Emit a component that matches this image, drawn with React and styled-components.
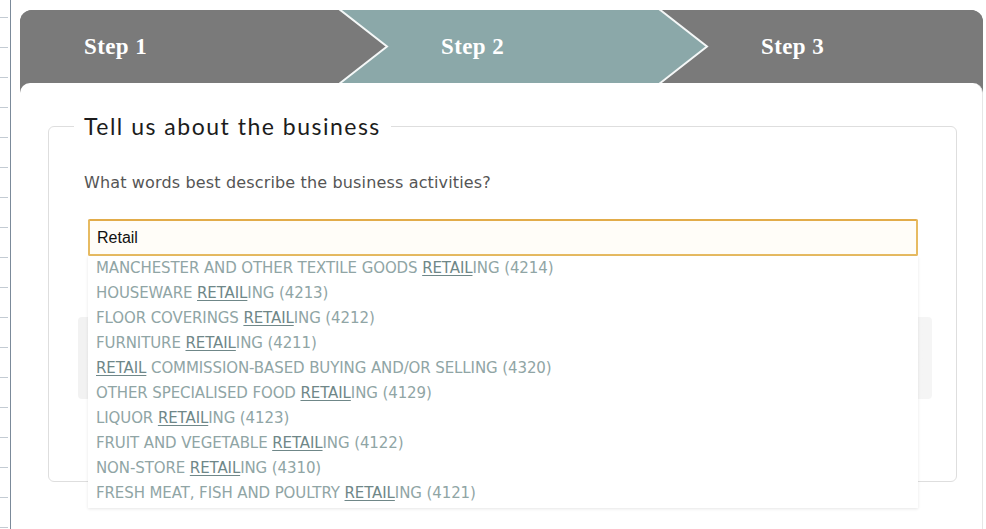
import React from "react";
import styled, { createGlobalStyle } from "styled-components";

const GlobalStyle = createGlobalStyle`
    html, body {
        margin: 0;
        padding: 0;
        background: #ffffff;
        overflow: hidden;
    }
`;

const Page = styled.div`
    display: flex;
    height: 529px;
    overflow: hidden;
`;

const Ruler = styled.div`
    width: 10px;
    flex: none;
    border-right: 1px solid #7b8a9a;
    background: linear-gradient(to bottom, transparent 17px, #c3cbd3 17px, #c3cbd3 18px, transparent 18px) 0 0 / 8px 30px repeat-y;
`;

const Main = styled.main`
    width: 963px;
    margin-left: 9px;
    padding-top: 10px;
    display: flex;
    flex-direction: column;
`;

const TabBar = styled.nav`
    position: relative;
    z-index: 0;
    display: flex;
    background: #7a7a7a;
    border-radius: 12px 12px 0 0;
    padding-bottom: 10px;
    overflow: hidden;
`;

const Step = styled.div`
    position: relative;
    z-index: ${(p) => p.$layer};
    flex: ${(p) => (p.$last ? "1" : "none")};
    width: ${(p) => (p.$last ? "auto" : "320px")};
    height: 73px;
    display: flex;
    align-items: center;
    padding-left: ${(p) => p.$indent}px;
    box-sizing: border-box;
    background: ${(p) => (p.$active ? "#8ba8a9" : "#7a7a7a")};
    color: #ffffff;
    font-family: "Liberation Serif", serif;
    font-weight: bold;
    font-size: 23px;
    letter-spacing: 0.4px;
`;

const Chevron = styled.svg`
    position: absolute;
    top: 0;
    right: -48px;
    width: 49px;
    height: 73px;
    overflow: visible;
`;

const Card = styled.section`
    position: relative;
    z-index: 1;
    margin-top: -10px;
    flex: 1;
    background: #ffffff;
    border-radius: 10px 10px 0 0;
    border-right: 1px solid #e6e6e6;
    padding: 29px 25px 0 28px;
`;

const Fieldset = styled.fieldset`
    margin: 0;
    border: 1px solid #dedede;
    border-radius: 6px;
    padding: 10px 38px 84px 35px;
    height: 370px;
    box-sizing: border-box;
`;

const Legend = styled.legend`
    margin-left: -10px;
    padding: 0 10px;
    font-family: Lato, "Open Sans", sans-serif;
    font-size: 23px;
    line-height: 28px;
    color: #1c1c1c;
    letter-spacing: 1.5px;
`;

const Question = styled.p`
    margin: 23px 0 0;
    font-family: "DejaVu Sans", sans-serif;
    font-size: 16px;
    line-height: 20px;
    color: #555555;
    letter-spacing: 0.15px;
`;

const Field = styled.div`
    position: relative;
    margin: 26px 0 0 4px;
`;

const Input = styled.div`
    height: 37px;
    box-sizing: border-box;
    border: 2px solid #e7bb62;
    border-top-color: #e2ac4a;
    border-radius: 2px;
    background: #fffdf8;
    padding-left: 7px;
    display: flex;
    align-items: center;
    font-family: "Liberation Sans", Arial, sans-serif;
    font-size: 16px;
    color: #111111;
`;

const Suggestions = styled.ul`
    position: absolute;
    top: 37px;
    left: 0;
    right: 0;
    z-index: 2;
    margin: 0;
    padding: 0 0 2px;
    list-style: none;
    background: #ffffff;
    box-shadow: 0 1px 3px rgba(0, 0, 0, 0.1);
`;

const Suggestion = styled.li`
    padding-left: 8px;
    font-family: "DejaVu Sans", sans-serif;
    font-size: 15px;
    line-height: 25px;
    color: #90a5a5;
    white-space: nowrap;
    letter-spacing: -0.1px;
`;

const Match = styled.span`
    color: #6f8788;
    text-decoration: underline;
    text-underline-offset: 2px;
`;

const Shade = styled.div`
    margin: 61px -14px 0 -6px;
    height: 82px;
    border-radius: 4px;
    background: linear-gradient(to right, #f2f2f2, #f5f5f5);
`;

const steps = [
    { label: "Step 1", indent: 64, fill: "#7a7a7a" },
    { label: "Step 2", indent: 101, fill: "#8ba8a9", active: true },
    { label: "Step 3", indent: 101 },
];

const suggestions = [
    ["MANCHESTER AND OTHER TEXTILE GOODS ", "ING (4214)"],
    ["HOUSEWARE ", "ING (4213)"],
    ["FLOOR COVERINGS ", "ING (4212)"],
    ["FURNITURE ", "ING (4211)"],
    ["", " COMMISSION-BASED BUYING AND/OR SELLING (4320)"],
    ["OTHER SPECIALISED FOOD ", "ING (4129)"],
    ["LIQUOR ", "ING (4123)"],
    ["FRUIT AND VEGETABLE ", "ING (4122)"],
    ["NON-STORE ", "ING (4310)"],
    ["FRESH MEAT, FISH AND POULTRY ", "ING (4121)"],
];

const App = () => {
    return (
        <Page>
            <GlobalStyle />
            <Ruler />
            <Main>
                <TabBar>
                    {steps.map((s, i) => (
                        <Step
                            key={s.label}
                            $indent={s.indent}
                            $active={s.active}
                            $last={i === steps.length - 1}
                            $layer={steps.length - i}
                        >
                            {s.label}
                            {s.fill && (
                                <Chevron viewBox="0 0 49 73">
                                    <polygon points="0,0 48,36.5 0,73" fill={s.fill} />
                                    <polyline points="0,-1 48,36.5 0,74" fill="none" stroke="#f4f7f7" strokeWidth="2" />
                                </Chevron>
                            )}
                        </Step>
                    ))}
                </TabBar>
                <Card>
                    <Fieldset>
                        <Legend>Tell us about the business</Legend>
                        <Question>What words best describe the business activities?</Question>
                        <Field>
                            <Input>Retail</Input>
                            <Suggestions>
                                {suggestions.map(([before, after]) => (
                                    <Suggestion key={before + after}>
                                        {before}
                                        <Match>RETAIL</Match>
                                        {after}
                                    </Suggestion>
                                ))}
                            </Suggestions>
                        </Field>
                        <Shade />
                    </Fieldset>
                </Card>
            </Main>
        </Page>
    );
};

export default App;
